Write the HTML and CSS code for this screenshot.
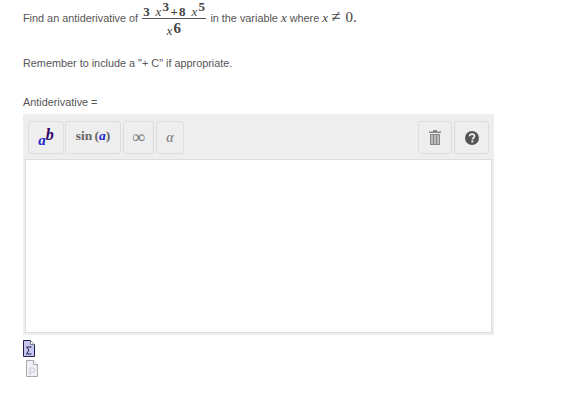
FILE: index.html
```html
<!DOCTYPE html>
<html lang="en">
<head>
<meta charset="utf-8">
<title>Antiderivative</title>
<link rel="stylesheet" href="styles.css">
</head>
<body>
<main class="page">
  <div class="question">
    <span class="qtext">Find an antiderivative of</span>
    <span class="frac">
      <span class="num"><b>3</b> <i>x</i><sup>3</sup><b class="plus">+8</b> <i>x</i><sup>5</sup></span>
      <span class="den"><i>x</i><sup>6</sup></span>
    </span>
    <span class="qtext">in the variable <i class="mi">x</i> where <i class="mi">x</i> <span class="mo">≠</span> <span class="mo zero">0.</span></span>
  </div>
  <p class="remember">Remember to include a "+ C" if appropriate.</p>
  <p class="label">Antiderivative =</p>
  <section class="editor">
    <div class="toolbar">
      <button class="btn b-pow"><span class="blue">a</span><span class="purple">b</span></button>
      <button class="btn b-sin">sin<span class="paren">(<span class="blue">a</span>)</span></button>
      <button class="btn b-sym">∞</button>
      <button class="btn b-sym alpha">α</button>
      <span class="spacer"></span>
      <button class="btn b-icon" aria-label="Clear">
        <svg width="12" height="15" viewBox="0 0 12 15"><path d="M0 1.500h12V3H0zM4 0h4v2H4z" fill="#888"/><path d="M1 4h10v11H1z" fill="#888"/><path d="M3 5v9M6 5v9M9 5v9" stroke="#ddd" stroke-width="1.200"/></svg>
      </button>
      <button class="btn b-icon" aria-label="Help">
        <svg width="14" height="14" viewBox="0 0 14 14"><circle cx="7" cy="7" r="7" fill="#555"/><path d="M4.700 5.200C4.800 3.800 5.800 3.200 7 3.200c1.400 0 2.400.8 2.400 2 0 1.800-2 1.700-2 3.200" fill="none" stroke="#eee" stroke-width="1.700"/><rect x="6.400" y="9.500" width="2" height="1.900" fill="#eee"/></svg>
      </button>
    </div>
    <div class="input"></div>
  </section>
  <div class="file-icons">
    <svg width="12" height="17" viewBox="0 0 12 17"><path d="M.5.500h7l4 4v12H.5z" fill="#c6c6f0" stroke="#20204a"/><path d="M7.500.500v4h4" fill="#fff" stroke="#777"/><path d="M8.500 7H3.500l2.500 3L3.500 14h5" fill="none" stroke="#20204a"/></svg>
    <svg class="icon-second" width="12" height="17" viewBox="0 0 12 17"><path d="M.5.500h7l4 4v12H.5z" fill="#f0f0f8" stroke="#aaa"/><path d="M7.500.500v4h4" fill="#fff" stroke="#aaa"/><path d="M4 15V8h3a2 2 0 0 1 0 4H4" fill="none" stroke="#ccc"/></svg>
  </div>
</main>
</body>
</html>
```
FILE: styles.css
```css
* { box-sizing: border-box; }
html, body { margin: 0; padding: 0; background: #fff; }
body { font: 10.85px/12px "Liberation Sans", Arial, sans-serif; color: #555; }
.page { padding: 0 0 0 23px; width: 576px; }
.question { display: flex; align-items: center; gap: 4px; height: 37px; white-space: pre; }
.qtext { margin-bottom: 2px; }
.frac { display: flex; flex-direction: column; align-items: center; color: #444; font: 13px/1 "Liberation Serif", serif; }
.num { border-bottom: 1px solid #555; height: 19px; line-height: 24px; white-space: pre; letter-spacing: 1.3px; padding: 0 0 0 1px; }
.den { height: 18px; line-height: 24px; letter-spacing: 1px; }
.frac b { font-weight: bold; font-size: 13px; }
.frac sup { font-size: 13px; line-height: 0; vertical-align: 5px; font-weight: bold; }
.den sup { font-size: 15px; vertical-align: 2px; }
.frac i { font: italic 13px "Liberation Serif", serif; color: #444; }
.mi { font: italic 13px "Liberation Serif", serif; color: #444; }
.mo { font: 17px "Liberation Serif", serif; line-height: 12px; color: #444; }
.zero { font-size: 15px; margin-left: 2px; }
.remember { margin: 0; padding-top: 20px; height: 45px; }
.label { margin: 0; padding-top: 14px; height: 32px; }
.editor { width: 471px; height: 221px; background: #eee; padding: 7px 2px 2px; display: flex; flex-direction: column; gap: 5px; }
.toolbar { display: flex; gap: 1px; height: 33px; padding: 0 3px; }
.btn { height: 33px; padding: 0; border: 1px solid #ddd; border-radius: 3px; background: #eee; display: flex; align-items: center; justify-content: center; font-family: "Liberation Serif", serif; color: #555; }
.b-pow { width: 36px; font-size: 16px; font-style: italic; font-weight: bold; padding-top: 2px; }
.b-pow .purple { color: #306; position: relative; top: -4px; }
.b-pow .blue { font-size: 15px; position: relative; top: 2px; }
.blue { color: #2222cc; }
.b-sin { width: 56px; font-size: 13.5px; font-weight: bold; color: #666; gap: 2px; padding-bottom: 3px; }
.b-sin .blue { font-style: italic; }
.b-sym { width: 31px; font-size: 18px; color: #777; margin-left: 1px; }
.alpha { width: 28px; font-size: 14px; font-style: italic; }
.spacer { flex: 1; }
.b-icon { width: 34px; }
.b-icon:last-child { width: 35px; margin-left: 1px; }
.input { flex: 1; background: #fff; border: 1px solid #ddd; }
.file-icons { display: flex; flex-direction: column; gap: 3px; margin-top: 5px; }
.file-icons svg { display: block; }
.icon-second { margin-left: 3px; }
```
